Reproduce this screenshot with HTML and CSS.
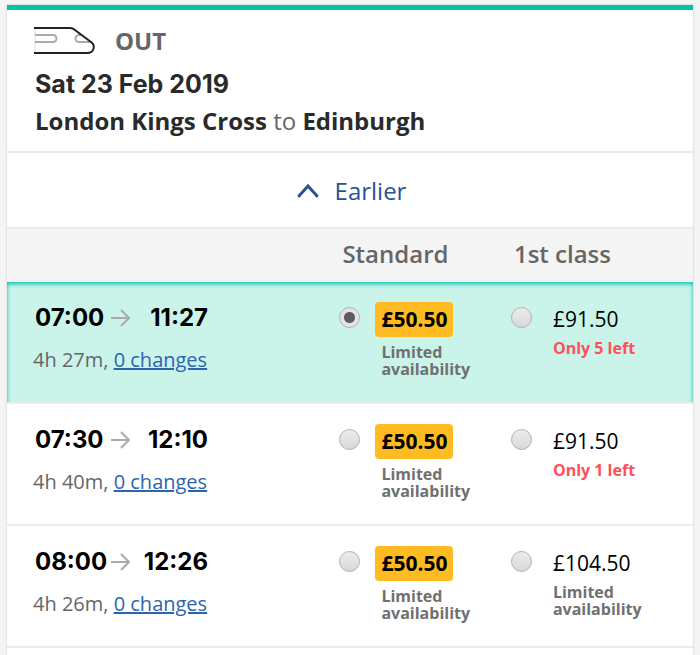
FILE: index.html
```html
<!DOCTYPE html>
<html lang="en">
<head>
<meta charset="utf-8">
<meta name="viewport" content="width=device-width, initial-scale=1">
<title>Outbound trains</title>
<link rel="stylesheet" href="styles.css">
</head>
<body>
<main class="card">
  <header class="trip">
    <div class="direction">
      <svg class="train" viewBox="0 0 62 29" aria-hidden="true">
        <path class="edge" d="M1 2V26"/>
        <path class="window" d="M1 9H19A3.5 3.5 0 0 1 19 16H1M47 9H45A3.5 3.5 0 0 0 45 16H57"/>
        <path class="body" d="M0 2H36Q39 2 41 4L57 16C62 20 60 27 53 27H0"/>
      </svg>
      <span>OUT</span>
    </div>
    <h1 class="date">Sat 23 Feb 2019</h1>
    <h2 class="route">London Kings Cross <span class="to">to</span> Edinburgh</h2>
  </header>
  <button class="earlier" type="button">
    <svg class="chevron" viewBox="0 0 24 16" aria-hidden="true"><path d="M3 13L12 3L21 13"/></svg>
    Earlier
  </button>
  <table class="fares">
    <thead>
      <tr><td class="journey"></td><th class="standard" scope="col">Standard</th><th class="first" scope="col">1st class</th></tr>
    </thead>
    <tbody>
      <tr class="selected">
        <td class="journey">
          <div class="times"><span>07:00</span><svg class="arrow" viewBox="0 0 20 18" aria-hidden="true"><path d="M1 9H18M11 1L19 9L11 17"/></svg><span class="arrive">11:27</span></div>
          <div class="duration">4h 27m, <a href="#">0 changes</a></div>
        </td>
        <td><label class="fare"><input type="radio" name="fare" checked><span class="offer"><span class="price best">£50.50</span><span class="note">Limited availability</span></span></label></td>
        <td><label class="fare"><input type="radio" name="fare"><span class="offer"><span class="price">£91.50</span><span class="note few">Only 5 left</span></span></label></td>
      </tr>
      <tr>
        <td class="journey">
          <div class="times"><span>07:30</span><svg class="arrow" viewBox="0 0 20 18" aria-hidden="true"><path d="M1 9H18M11 1L19 9L11 17"/></svg><span class="arrive">12:10</span></div>
          <div class="duration">4h 40m, <a href="#">0 changes</a></div>
        </td>
        <td><label class="fare"><input type="radio" name="fare"><span class="offer"><span class="price best">£50.50</span><span class="note">Limited availability</span></span></label></td>
        <td><label class="fare"><input type="radio" name="fare"><span class="offer"><span class="price">£91.50</span><span class="note few">Only 1 left</span></span></label></td>
      </tr>
      <tr>
        <td class="journey">
          <div class="times"><span>08:00</span><svg class="arrow" viewBox="0 0 20 18" aria-hidden="true"><path d="M1 9H18M11 1L19 9L11 17"/></svg><span class="arrive">12:26</span></div>
          <div class="duration">4h 26m, <a href="#">0 changes</a></div>
        </td>
        <td><label class="fare"><input type="radio" name="fare"><span class="offer"><span class="price best">£50.50</span><span class="note">Limited availability</span></span></label></td>
        <td><label class="fare"><input type="radio" name="fare"><span class="offer"><span class="price">£104.50</span><span class="note">Limited availability</span></span></label></td>
      </tr>
    </tbody>
  </table>
</main>
</body>
</html>
```
FILE: styles.css
```css
* {
  box-sizing: border-box;
}

body {
  margin: 0;
  padding: 5px 7px 0;
  background: #f4f4f4;
  font-family: "Open Sans", "Noto Sans", sans-serif;
  color: #2a2a2a;
}

.card {
  min-height: calc(100vh - 5px);
  background: #fff;
  border-top: 5px solid #00c4a7;
  box-shadow: 0 0 2px rgba(0, 0, 0, 0.2);
}

.trip {
  padding: 14px 28px 13px;
  border-bottom: 2px solid #ebebeb;
}

.direction {
  display: flex;
  align-items: center;
  gap: 19px;
  height: 32px;
  font-size: 24px;
  font-weight: 700;
  color: #666;
}

.train {
  width: 62px;
  height: 29px;
  margin-left: -1px;
}

.train path {
  fill: none;
  stroke-width: 2;
}

.train .edge {
  stroke: #ddd;
  stroke-width: 1;
}

.train .window {
  stroke: #aaa;
}

.train .body {
  stroke: #222;
}

.date {
  margin: 8px 0 0;
  font: 700 25px/40px Inter, sans-serif;
}

.route {
  margin: 0;
  font-size: 24px;
  font-weight: 700;
  line-height: 34px;
}

.to {
  font-weight: 400;
  color: #666;
}

.earlier {
  display: flex;
  align-items: center;
  justify-content: center;
  gap: 15px;
  width: 100%;
  height: 76px;
  padding: 2px 0 0 2px;
  border: 0;
  border-bottom: 2px solid #ebebeb;
  background: none;
  font: 24px/32px "Open Sans", "Noto Sans", sans-serif;
  color: #245397;
}

.chevron {
  width: 24px;
  height: 16px;
  fill: none;
  stroke: #245397;
  stroke-width: 3;
  stroke-linecap: round;
}

.fares {
  width: 100%;
  border-spacing: 0;
  table-layout: fixed;
  text-align: left;
}

.fares th,
.fares td {
  padding: 0 0 0 10px;
  vertical-align: top;
}

.fares .journey {
  width: 47%;
  padding-left: 26px;
}

.fares .standard {
  width: 25%;
}

.fares thead td,
.fares th {
  height: 53px;
  background: #f4f4f4;
}

.fares th {
  padding-left: 13px;
  font-size: 24px;
  font-weight: 600;
  line-height: 50px;
  color: #666;
}

.fares tbody td {
  height: 122px;
  padding-top: 20px;
  border-bottom: 2px solid #ebebeb;
}

.selected {
  background: #caf4ea;
  box-shadow: inset 0 2px 4px #00c4a7;
}

.times {
  display: grid;
  grid-template-columns: 75px 20px 78px;
  align-items: center;
  margin-left: 2px;
  font: 700 24px/32px Inter, sans-serif;
  color: #000;
}

.arrow {
  width: 20px;
  height: 18px;
  fill: none;
  stroke: #aaa;
  stroke-width: 2;
}

.arrive {
  text-align: right;
}

.duration {
  margin-top: 12px;
  font-size: 20px;
  line-height: 28px;
  color: #666;
}

.duration a {
  color: #2d64b0;
}

.fare {
  display: flex;
  align-items: flex-start;
  gap: 15px;
}

.fare input {
  appearance: none;
  flex: none;
  width: 21px;
  height: 21px;
  margin: 5px 0 0;
  border: 1px solid #b0b0b0;
  border-radius: 50%;
  background: linear-gradient(#ececec, #d8d8d8);
}

.fare input:checked {
  background: radial-gradient(circle, #5c5c5c 5px, #e4e4e4 6px);
}

.offer {
  display: flex;
  flex-direction: column;
  align-items: flex-start;
}

.price {
  padding: 0 6px;
  border-radius: 4px;
  font-size: 21px;
  line-height: 35px;
  color: #000;
}

.best {
  margin-bottom: 7px;
  background: #ffbc22;
  font-weight: 700;
}

.note {
  width: 110px;
  padding-left: 6px;
  font-size: 16px;
  font-weight: 700;
  line-height: 17px;
  color: #707070;
}

.price:not(.best) {
  margin-bottom: 3px;
}

.few {
  color: #ff5059;
}
```
